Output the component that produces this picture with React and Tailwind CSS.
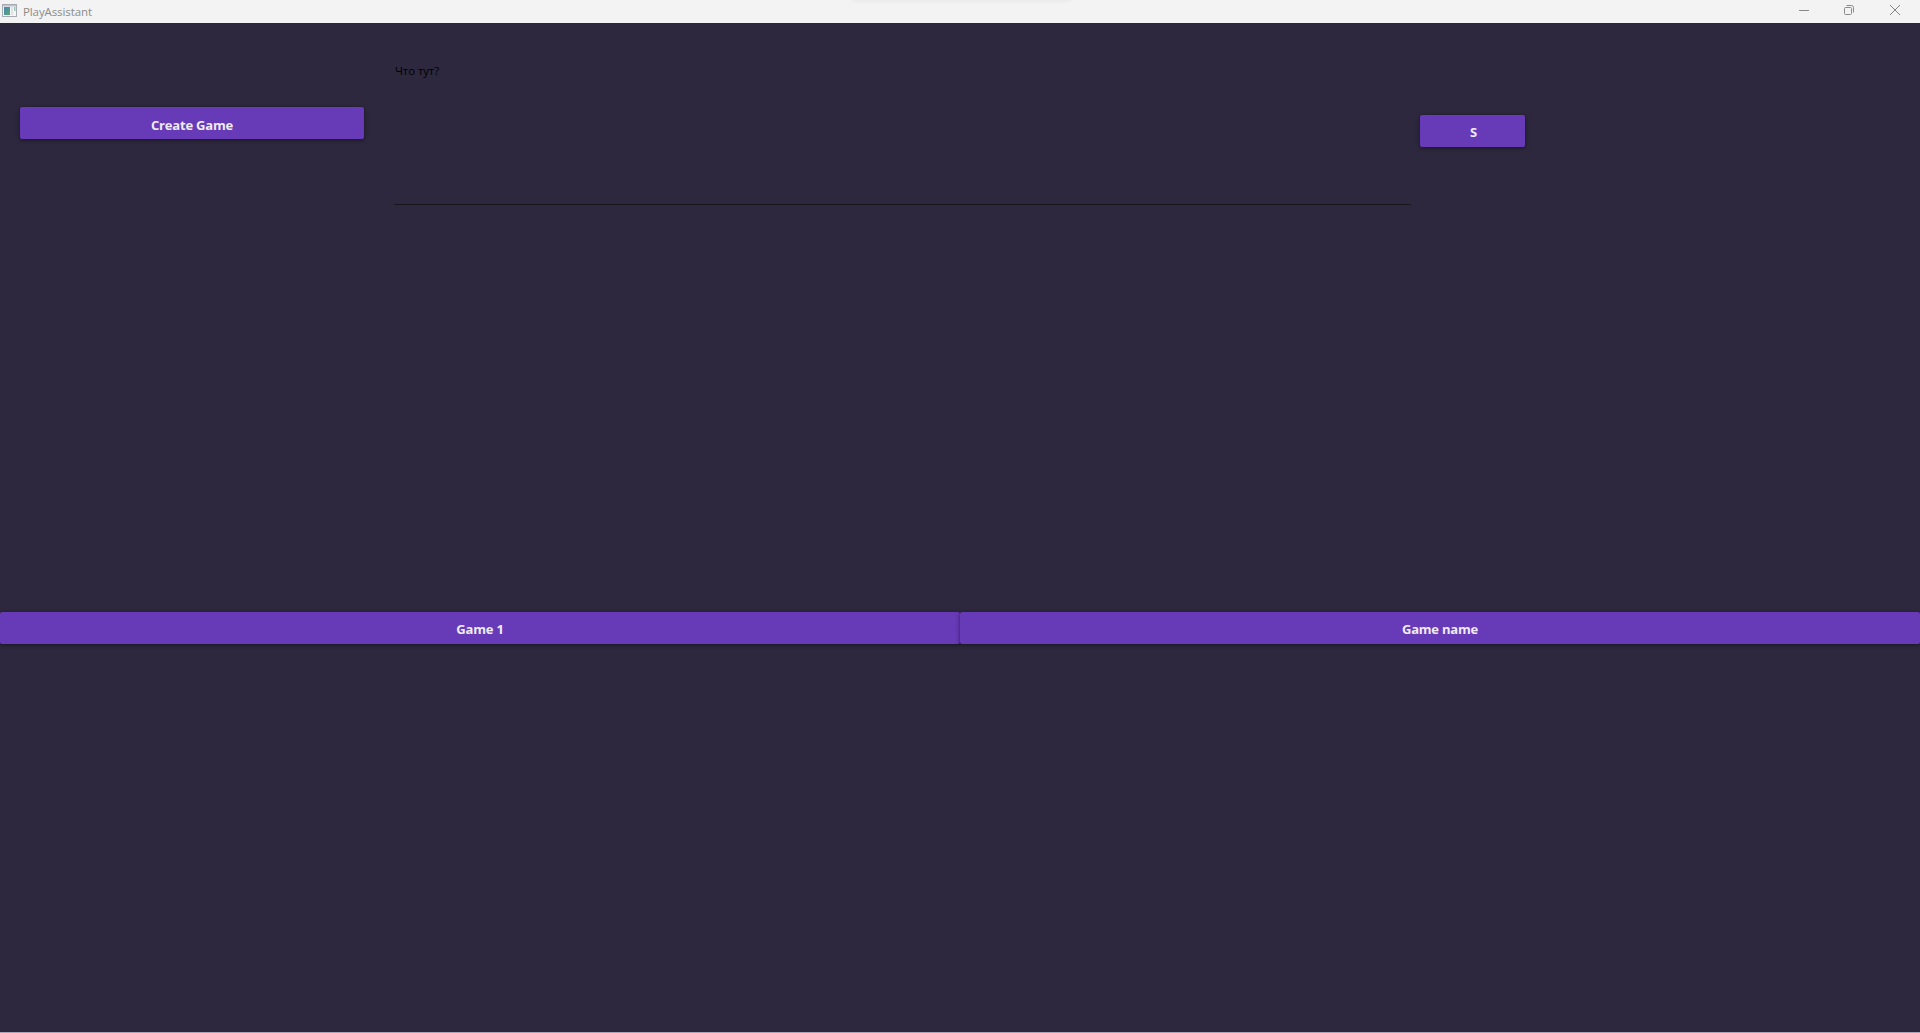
const buttonClass =
  "flex h-8 items-center justify-center rounded-[2px] bg-[#673ab7] text-[13px] leading-none font-bold tracking-[-0.2px] text-[#f0eaf8] shadow-[0_1px_4px_rgba(0,0,0,0.5)]";

function AppIcon() {
  return (
    <svg width="16" height="14" viewBox="0 0 16 14" className="shrink-0">
      <defs>
        <linearGradient id="pane" x1="0" y1="0" x2="1" y2="1">
          <stop offset="0" stopColor="#4a86b5" />
          <stop offset="1" stopColor="#58aa70" />
        </linearGradient>
      </defs>
      <rect x="0.5" y="0.5" width="14" height="12" fill="#f5f5f7" stroke="#a6abb3" />
      <rect x="1" y="1" width="13" height="1.5" fill="#bcc4cd" />
      <rect x="2" y="3" width="6" height="8" fill="url(#pane)" />
      <rect x="9" y="3" width="2" height="8" fill="#dfe1e5" />
      <rect x="12" y="3" width="1.5" height="4" fill="#9cc4b0" />
    </svg>
  );
}

function WindowControls() {
  return (
    <div className="flex items-start gap-[36px] pt-[5px] pr-[20px]">
      <svg width="10" height="10" viewBox="0 0 10 10" stroke="#8a8a8a" fill="none" className="-mr-px">
        <path d="M0 5.5H10" />
      </svg>
      <svg width="10" height="10" viewBox="0 0 10 10" stroke="#8a8a8a" fill="none">
        <rect x="0.5" y="2.5" width="7" height="7" rx="1" />
        <path d="M2.5 0.5H7.5Q9.5 0.5 9.5 2.5V7.5" />
      </svg>
      <svg width="10" height="10" viewBox="0 0 10 10" stroke="#858585" fill="none">
        <path d="M0 0L10 10M10 0L0 10" />
      </svg>
    </div>
  );
}

function TitleBar() {
  return (
    <header className="relative flex h-[23px] justify-between overflow-hidden bg-[#f3f3f3]">
      <div className="absolute -top-[10px] left-[852px] h-[10px] w-[218px] rounded shadow-[0_0_6px_rgba(0,0,0,0.08)]" />
      <div className="flex items-start pt-1 pl-[2px]">
        <AppIcon />
        <span className="ml-[5px] text-[11.5px] leading-[16px] tracking-[-0.1px] text-[#8b8b8b]">PlayAssistant</span>
      </div>
      <WindowControls />
    </header>
  );
}

export default function App() {
  return (
    <div className="flex h-[1033px] flex-col overflow-hidden border-b border-[#a9a8bb] bg-[#2d283e] font-['Open_Sans','Noto_Sans',sans-serif]">
      <TitleBar />
      <main className="flex flex-1 flex-col">
        <section className="flex h-[589px] items-start">
          <button className={`${buttonClass} mt-[84px] ml-5 w-[344px] pt-[5px]`}>Create Game</button>
          <div className="ml-[30px] h-[182px] w-[1017px] border-b border-[#18151d] pt-[40px] pl-px text-[11.5px] leading-[16px] tracking-[-0.1px] text-black">
            Что тут?
          </div>
          <button className={`${buttonClass} mt-[92px] ml-[9px] w-[105px] pt-[3px] pl-[2px]`}>S</button>
        </section>
        <section className="grid grid-cols-2">
          <button className={`${buttonClass} pt-[3px]`}>Game 1</button>
          <button className={`${buttonClass} pt-[3px]`}>Game name</button>
        </section>
      </main>
    </div>
  );
}
